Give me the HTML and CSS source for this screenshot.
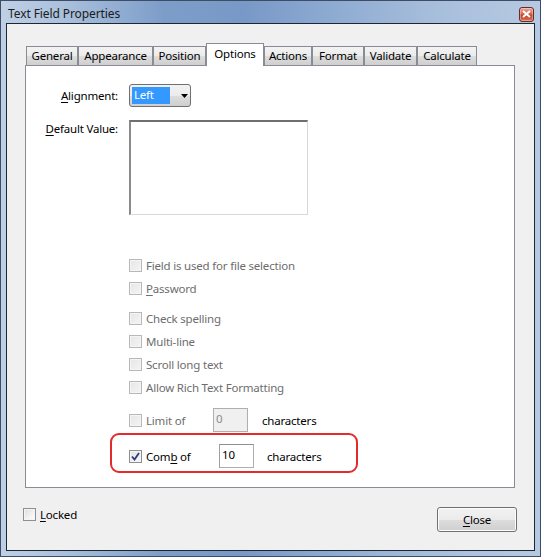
FILE: index.html
```html
<!DOCTYPE html>
<html>
<head>
<meta charset="utf-8">
<title>Text Field Properties</title>
<link rel="stylesheet" href="styles.css">
</head>
<body>
<div class="window">
  <div class="titlebar">
    <span class="title">Text Field Properties</span>
    <span class="close-x">
      <svg width="9" height="8" viewBox="0 0 9 8"><path d="M1 1 L8 7 M8 1 L1 7" stroke="#fff" stroke-width="2"/></svg>
    </span>
  </div>
  <div class="client">
    <div class="tabs">
      <div class="tab w-general">General</div>
      <div class="tab w-appearance">Appearance</div>
      <div class="tab w-position">Position</div>
      <div class="tab tab-active w-options">Options</div>
      <div class="tab w-actions">Actions</div>
      <div class="tab w-format">Format</div>
      <div class="tab w-validate">Validate</div>
      <div class="tab w-calculate">Calculate</div>
    </div>
    <div class="panel">
      <div class="form-row row-align">
        <div class="label"><u>A</u>lignment:</div>
        <div class="select">
          <span class="select-value">Left</span>
          <svg class="select-arrow" width="7" height="4" viewBox="0 0 7 4"><path d="M0 0 H7 L3.5 4 Z" fill="#000"/></svg>
        </div>
      </div>
      <div class="form-row row-default">
        <div class="label label-top"><u>D</u>efault Value:</div>
        <div class="textarea"></div>
      </div>
      <div class="checks">
        <div class="check disabled"><span class="cb"></span><span>Field is used for file selection</span></div>
        <div class="check disabled"><span class="cb"></span><span><u>P</u>assword</span></div>
      </div>
      <div class="checks checks-2">
        <div class="check disabled"><span class="cb"></span><span>Check spelling</span></div>
        <div class="check disabled"><span class="cb"></span><span>Multi-line</span></div>
        <div class="check disabled"><span class="cb"></span><span>Scroll long text</span></div>
        <div class="check disabled"><span class="cb"></span><span>Allow Rich Text Formatting</span></div>
      </div>
      <div class="limit-row">
        <div class="check disabled lbl-limit"><span class="cb"></span><span>Limit of</span></div>
        <div class="input input-disabled">0</div>
        <span class="chars chars-limit">characters</span>
      </div>
      <div class="highlight">
        <div class="comb-row">
          <div class="check lbl-comb"><span class="cb cb-checked"><svg width="9" height="9" viewBox="0 0 9 9"><path d="M1 4.5 L3.5 7.5 L8 1" fill="none" stroke="#283c7c" stroke-width="1.8"/></svg></span><span>Com<u>b</u> of</span></div>
          <div class="input">10</div>
          <span class="chars chars-comb">characters</span>
        </div>
      </div>
    </div>
    <div class="footer">
      <div class="check locked"><span class="cb"></span><span><u>L</u>ocked</span></div>
      <button class="btn"><u>C</u>lose</button>
    </div>
  </div>
</div>
</body>
</html>
```

FILE: styles.css
```css
html, body {
  margin: 0;
  padding: 0;
  background: #ffffff;
}

body {
  font-family: "Noto Sans", "DejaVu Sans", sans-serif;
  font-size: 11.5px;
  letter-spacing: -0.2px;
  color: #000;
}

u {
  text-decoration: underline;
  text-underline-offset: 2px;
}

.window {
  width: 541px;
  height: 557px;
  box-sizing: border-box;
  border: 1px solid #3e4d63;
  padding: 0 5px 5px;
  display: flex;
  flex-direction: column;
  background: linear-gradient(to right, #bfd0e6 0%, #a9c0dc 12%, #7d9dc9 30%, #7898c7 45%, #8eabd2 62%, #a7bedb 80%, #b6c9e2 100%);
}

.titlebar {
  height: 22px;
  flex: none;
  display: flex;
  align-items: center;
  padding-left: 2px;
  padding-right: 1px;
}

.title {
  flex: 1;
  color: #1b1b1b;
  font-size: 12px;
  letter-spacing: -0.1px;
  margin-top: 2px;
}

.close-x {
  width: 15px;
  height: 15px;
  box-sizing: border-box;
  margin-top: 4px;
  border: 1px solid #6b2a22;
  border-radius: 3px;
  background: linear-gradient(to bottom, #e9a899 0%, #d46a52 45%, #c0422a 55%, #d9735a 100%);
  display: flex;
  align-items: center;
  justify-content: center;
  box-shadow: inset 0 0 0 1px rgba(255, 255, 255, 0.35);
}

.client {
  flex: 1;
  border: 1px solid #1d2733;
  background: #f0f0f0;
  padding: 19px 19px 0 18px;
  display: flex;
  flex-direction: column;
}

/* Tabs */
.tabs {
  display: flex;
  align-items: flex-end;
  height: 22px;
  padding-left: 1px;
  position: relative;
  z-index: 2;
}

.tab {
  box-sizing: border-box;
  height: 19px;
  border: 1px solid #898c95;
  border-bottom: none;
  background: linear-gradient(to bottom, #f3f3f3 0%, #ebebeb 50%, #dddddd 51%, #cfcfcf 100%);
  text-align: center;
  line-height: 18px;
  color: #000;
  white-space: nowrap;
}

.tab-active {
  height: 23px;
  margin-bottom: -1px;
  background: #ffffff;
  line-height: 19px;
}

.w-general { width: 52px; }
.w-appearance { width: 75px; }
.w-position { width: 53px; }
.w-options { width: 58px; }
.w-actions { width: 48px; }
.w-format { width: 52px; }
.w-validate { width: 53px; }
.w-calculate { width: 60px; }

/* Panel */
.panel {
  box-sizing: border-box;
  width: 490px;
  height: 423px;
  border: 1px solid #898c95;
  background: #ffffff;
  padding-top: 18px;
  display: flex;
  flex-direction: column;
}

.form-row {
  display: flex;
  gap: 11px;
}

.label {
  width: 92px;
  text-align: right;
  color: #000;
}

.row-align {
  align-items: center;
  height: 23px;
}

.row-default {
  margin-top: 13px;
}

.label-top {
  padding-top: 1px;
}

.select {
  box-sizing: border-box;
  width: 62px;
  height: 23px;
  border: 1px solid #707070;
  border-radius: 3px;
  background: linear-gradient(to bottom, #f2f2f2 0%, #ebebeb 50%, #dddddd 51%, #cfcfcf 100%);
  display: flex;
  align-items: center;
  padding: 2px;
}

.select-value {
  width: 38px;
  height: 17px;
  background: #3399ff;
  color: #fff;
  line-height: 16px;
  padding-left: 2px;
  box-sizing: border-box;
}

.select-arrow {
  margin-left: 11px;
}

.textarea {
  box-sizing: border-box;
  width: 179px;
  height: 95px;
  background: #fff;
  border-top: 2px solid #6f6f6f;
  border-left: 2px solid #8a8a8a;
  border-right: 1px solid #d8d8d8;
  border-bottom: 1px solid #d8d8d8;
}

/* Checkboxes */
.checks {
  margin-left: 103px;
  margin-top: 39px;
  display: flex;
  flex-direction: column;
}

.checks-2 {
  margin-top: 7px;
}

.check {
  display: flex;
  align-items: center;
  gap: 4px;
  height: 23px;
  white-space: nowrap;
}

.check.disabled {
  color: #6d6d6d;
}

.cb {
  box-sizing: border-box;
  width: 13px;
  height: 13px;
  flex: none;
  border: 1px solid #8e8f8f;
  background: linear-gradient(135deg, #dcdcdc 0%, #f6f6f6 70%, #ffffff 100%);
  box-shadow: inset 0 0 0 1px #f4f4f4;
  display: flex;
  align-items: center;
  justify-content: center;
}

.check.disabled .cb {
  border-color: #b8b8b8;
  background: linear-gradient(135deg, #e6e6e6 0%, #f4f4f4 100%);
}

.cb-checked {
  background: linear-gradient(135deg, #e3e3e3 0%, #f8f8f8 100%);
}

.limit-row {
  margin-left: 103px;
  margin-top: 9px;
  height: 24px;
  display: flex;
  align-items: center;
}

.lbl-limit {
  width: 84px;
}

.input {
  box-sizing: border-box;
  width: 35px;
  height: 24px;
  border: 1px solid #abadb3;
  border-top-color: #8e8f8f;
  border-left-color: #a0a0a0;
  background: #fff;
  padding: 2px 0 0 2px;
  line-height: 16px;
}

.input-disabled {
  background: #f0f0f0;
  border-color: #afafaf;
  color: #8d8d8d;
}

.chars-limit {
  margin-left: 14px;
}

.highlight {
  box-sizing: border-box;
  width: 248px;
  height: 40px;
  margin-left: 84px;
  margin-top: 1px;
  border: 2px solid #e32b2b;
  border-radius: 9px;
  padding: 9px 0 0 17px;
}

.comb-row {
  display: flex;
  align-items: center;
  height: 24px;
}

.lbl-comb {
  width: 90px;
}

.chars-comb {
  margin-left: 13px;
}

/* Footer */
.footer {
  display: flex;
  justify-content: space-between;
  align-items: flex-start;
  margin: 19px -2px 0 -2px;
}

.locked {
  height: 13px;
  margin-top: 1px;
}

.btn {
  box-sizing: border-box;
  width: 80px;
  height: 25px;
  border: 1px solid #707070;
  border-radius: 3px;
  background: linear-gradient(to bottom, #f2f2f2 0%, #ebebeb 50%, #dddddd 51%, #cfcfcf 100%);
  font-family: inherit;
  font-size: 11.5px;
  letter-spacing: -0.2px;
  color: #000;
  padding: 0;
  box-shadow: inset 0 0 0 1px #fcfcfc;
}
```
